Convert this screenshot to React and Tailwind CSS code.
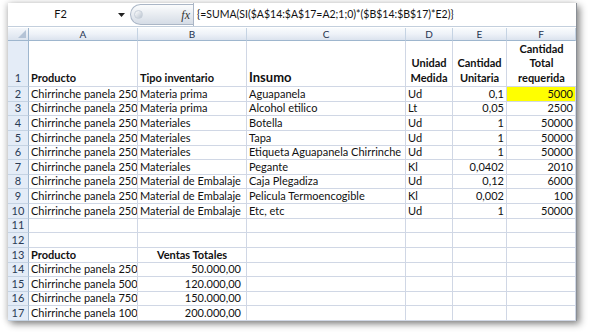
import React from "react";

const FONT = { fontFamily: "Lato, 'Open Sans', Arial, sans-serif" };

const colW = ["w-[109px]", "w-[109px]", "w-[159px]", "w-[47px]", "w-[54px]", "w-[69px]"];
const letters = ["A", "B", "C", "D", "E", "F"];

const data = [
  ["Chirrinche panela 250", "Materia prima", "Aguapanela", "Ud", "0,1", "5000"],
  ["Chirrinche panela 250", "Materia prima", "Alcohol etilico", "Lt", "0,05", "2500"],
  ["Chirrinche panela 250", "Materiales", "Botella", "Ud", "1", "50000"],
  ["Chirrinche panela 250", "Materiales", "Tapa", "Ud", "1", "50000"],
  ["Chirrinche panela 250", "Materiales", "Etiqueta Aguapanela Chirrinche", "Ud", "1", "50000"],
  ["Chirrinche panela 250", "Materiales", "Pegante", "Kl", "0,0402", "2010"],
  ["Chirrinche panela 250", "Material de Embalaje", "Caja Plegadiza", "Ud", "0,12", "6000"],
  ["Chirrinche panela 250", "Material de Embalaje", "Pelicula Termoencogible", "Kl", "0,002", "100"],
  ["Chirrinche panela 250", "Material de Embalaje", "Etc, etc", "Ud", "1", "50000"],
];

const sales = [
  ["Chirrinche panela 250", "50.000,00"],
  ["Chirrinche panela 500", "120.000,00"],
  ["Chirrinche panela 750", "150.000,00"],
  ["Chirrinche panela 1000", "200.000,00"],
];

function RowHead({ n, tall }) {
  return (
    <div
      className={`w-[21px] shrink-0 flex items-end justify-center border-r border-b border-r-[#9eb6ce] border-b-[#c5d3e3] bg-[#e4ecf7] text-[11px] leading-[14px] text-[#2a3b55] ${tall ? "pb-[1px]" : ""}`}
    >
      {n}
    </div>
  );
}

function Cell({ i, children, right, center, bold, bg, clip }) {
  return (
    <div
      className={`${colW[i]} shrink-0 flex items-end border-r border-b border-[#d0d7e5] px-[2px] whitespace-nowrap ${
        right ? "justify-end" : center ? "justify-center" : "justify-start"
      } ${bold ? "font-bold" : ""} ${bg || ""} ${clip ? "overflow-hidden" : ""}`}
    >
      <span className="leading-[14px]">{children}</span>
    </div>
  );
}

function Row({ n, children }) {
  return (
    <div className="flex h-[14.625px] text-[11px] text-[#111]">
      <RowHead n={n} />
      {children}
    </div>
  );
}

export default function App() {
  return (
    <div className="w-[590px] h-[335px] bg-white pl-[8px] pt-[3px] overflow-hidden" style={FONT}>
      <div className="w-[569px] h-[318px] bg-white flex flex-col border-r border-[#8a8f96] shadow-[3px_3px_7px_rgba(0,0,0,0.45),-2px_0px_6px_rgba(0,0,0,0.15)]">
        {/* formula bar */}
        <div className="flex h-[24px] border-b border-[#c3cfdd] bg-white">
          <div className="w-[105px] flex items-center justify-center text-[11px] text-[#111]">F2</div>
          <div className="w-[16px] flex items-center justify-center">
            <svg width="7" height="4" viewBox="0 0 7 4">
              <path d="M0 0 H7 L3.5 4 Z" fill="#222" />
            </svg>
          </div>
          <div className="w-[63px] my-[1px] ml-[1px] rounded-l-full border border-r-0 border-[#aab6c6] bg-gradient-to-b from-[#fbfcfd] via-[#e8ecf1] to-[#d5dce6] flex items-center justify-between pr-[3px]">
            <div className="ml-[3px] w-[9px] h-[9px] rounded-full bg-gradient-to-br from-[#ffffff] to-[#b9c3cf] border border-[#c8d0da]" />
            <span
              className="text-[12px] italic text-[#333] leading-none"
              style={{ fontFamily: "'Liberation Serif', serif" }}
            >
              fx
            </span>
          </div>
          <div className="flex-1 flex items-center pl-[3px] border-l border-[#aab6c6] text-[10.5px] text-[#111] whitespace-nowrap">
            {"{=SUMA(SI($A$14:$A$17=A2;1;0)*($B$14:$B$17)*E2)}"}
          </div>
        </div>
        {/* column header */}
        <div className="flex h-[13px] mt-[1px] text-[10px] text-[#1f3350]">
          <div className="w-[21px] shrink-0 border-r border-b border-[#9eb6ce] bg-gradient-to-b from-[#f4f7fb] to-[#dbe3ee] relative">
            <svg className="absolute right-[2px] bottom-[2px]" width="8" height="8" viewBox="0 0 8 8">
              <path d="M8 0 V8 H0 Z" fill="#b4c3d6" />
            </svg>
          </div>
          {letters.map((l, i) => (
            <div
              key={l}
              className={`${colW[i]} shrink-0 flex items-center justify-center border-r border-b border-r-[#c5d3e3] border-b-[#9eb6ce] bg-gradient-to-b from-[#f9fbfd] via-[#eef2f8] to-[#dbe3ee] leading-[12px]`}
            >
              {l}
            </div>
          ))}
        </div>
        {/* row 1 */}
        <div className="flex h-[46px] text-[11px] text-[#111]">
          <RowHead n={1} tall />
          <div className={`${colW[0]} shrink-0 flex items-end border-r border-b border-[#d0d7e5] px-[2px] pb-[1px] font-bold leading-[14px]`}>Producto</div>
          <div className={`${colW[1]} shrink-0 flex items-end border-r border-b border-[#d0d7e5] px-[2px] pb-[1px] font-bold leading-[14px]`}>Tipo inventario</div>
          <div className={`${colW[2]} shrink-0 flex items-end border-r border-b border-[#d0d7e5] px-[2px] pb-[1px] font-bold text-[13px] leading-[16px]`}>Insumo</div>
          <div className={`${colW[3]} shrink-0 flex items-end justify-center text-center border-r border-b border-[#d0d7e5] pb-[1px] font-bold leading-[14.5px]`}>
            Unidad<br />Medida
          </div>
          <div className={`${colW[4]} shrink-0 flex items-end justify-center text-center border-r border-b border-[#d0d7e5] pb-[1px] font-bold leading-[14.5px]`}>
            Cantidad<br />Unitaria
          </div>
          <div className={`${colW[5]} shrink-0 flex items-end justify-center text-center border-b border-[#d0d7e5] pb-[1px] font-bold leading-[14.5px]`}>
            Cantidad<br />Total<br />requerida
          </div>
        </div>
        {data.map((r, idx) => (
          <Row key={idx} n={idx + 2}>
            <Cell i={0} clip>{r[0]}</Cell>
            <Cell i={1} clip>{r[1]}</Cell>
            <Cell i={2} clip>{r[2]}</Cell>
            <Cell i={3}>{r[3]}</Cell>
            <Cell i={4} right>{r[4]}</Cell>
            <Cell i={5} right bg={idx === 0 ? "bg-[#ffff00]" : ""}>{r[5]}</Cell>
          </Row>
        ))}
        {[11, 12].map((n) => (
          <Row key={n} n={n}>
            {letters.map((l, i) => (
              <Cell key={l} i={i} />
            ))}
          </Row>
        ))}
        <Row n={13}>
          <Cell i={0} bold>Producto</Cell>
          <Cell i={1} bold center>Ventas Totales</Cell>
          <Cell i={2} />
          <Cell i={3} />
          <Cell i={4} />
          <Cell i={5} />
        </Row>
        {sales.map((s, k) => (
          <Row key={k} n={14 + k}>
            <Cell i={0} clip>{s[0]}</Cell>
            <div className={`${colW[1]} shrink-0 flex items-end justify-end border-r border-b border-[#d0d7e5] pr-[5px]`}>
              <span className="leading-[14px]">{s[1]}</span>
            </div>
            <Cell i={2} />
            <Cell i={3} />
            <Cell i={4} />
            <Cell i={5} />
          </Row>
        ))}
      </div>
    </div>
  );
}
